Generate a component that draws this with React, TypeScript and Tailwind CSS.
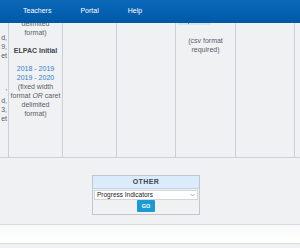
const NAV = ['Teachers', 'Portal', 'Help'];

// ends of lines from the column scrolled off to the left
const LEFT_LINES = ['d,', '9,', 'et', '', '', '', "'", 'd,', '3,', 'et'];

export default function App() {
  return (
    <div className="w-[300px] h-[248px] overflow-hidden bg-[#f0f1f3] font-['Liberation_Sans',Arial,sans-serif]">
      <nav className="h-[23px] flex items-center pl-[23px] gap-[29px] bg-gradient-to-b from-[#0b68ba] to-[#0059a6] text-white text-[7px]">
        {NAV.map(n => (
          <span key={n}>{n}</span>
        ))}
      </nav>

      <div className="h-[135px] flex border-b border-[#cdd0d4] text-[7px] leading-[9px] text-[#5a5f66]">
        <div className="w-[8px] pt-[10px] pr-[1px] text-right">
          {LEFT_LINES.map((l, i) => (
            <div key={i} className="h-[9px]">{l}</div>
          ))}
        </div>

        <div className="w-[54px] border-l border-[#cdd0d4] overflow-hidden text-center">
          <div className="-mt-[4px]">
            <div>delimited</div>
            <div>format)</div>
            <div className="mt-[9px] font-bold text-[#3f444b]">ELPAC Initial</div>
            <div className="mt-[9px] text-[#2f80cc]">2018 - 2019</div>
            <div className="text-[#2f80cc]">2019 - 2020</div>
            <div>(fixed width</div>
            <div className="whitespace-nowrap">format <i>OR</i> caret</div>
            <div>delimited</div>
            <div>format)</div>
          </div>
        </div>

        <div className="w-[54px] border-l border-[#cdd0d4]" />
        <div className="w-[59px] border-l border-[#cdd0d4]" />

        <div className="w-[60px] border-l border-[#cdd0d4] text-center">
          <div className="ml-[1px] w-[34px] h-[2px] bg-[#d3e6f7] flex">
            <span className="ml-[11px] w-[1px] h-[1px] bg-[#6c86a0]" />
          </div>
          <div className="mt-[11px]">(csv format</div>
          <div>required)</div>
        </div>

        <div className="w-[59px] border-l border-[#cdd0d4]" />
        <div className="w-[6px] border-l border-[#cdd0d4]" />
      </div>

      <div className="flex justify-center mt-[17px]">
        <div className="ml-[-8px] w-[108px] border border-[#c3c7cb] pb-[2px] flex flex-col items-center">
          <div className="w-full h-[13px] bg-[#dcebfb] border-b border-[#bfd3e6] flex items-center justify-center text-[7px] font-bold tracking-[0.4px] text-[#3b4650]">
            OTHER
          </div>
          <div className="mt-[1px] w-[104px] h-[10px] bg-white border border-[#d3d5d8] flex items-center justify-between px-[2px]">
            <span className="text-[6.5px] leading-none text-[#222]">Progress Indicators</span>
            <svg width="5" height="4" viewBox="0 0 5 4">
              <path d="M0.5 1 L2.5 3 L4.5 1" fill="none" stroke="#9aa0a6" strokeWidth="0.8" />
            </svg>
          </div>
          <div className="w-[18px] h-[12px] bg-[#1b9ad6] text-white text-[5.5px] font-bold flex items-center justify-center rounded-[1px]">
            GO
          </div>
        </div>
      </div>

      <div className="mt-[9px] h-[20px] border-y border-[#d8dbde] bg-gradient-to-b from-[#f7f8f9] to-white" />
    </div>
  );
}
